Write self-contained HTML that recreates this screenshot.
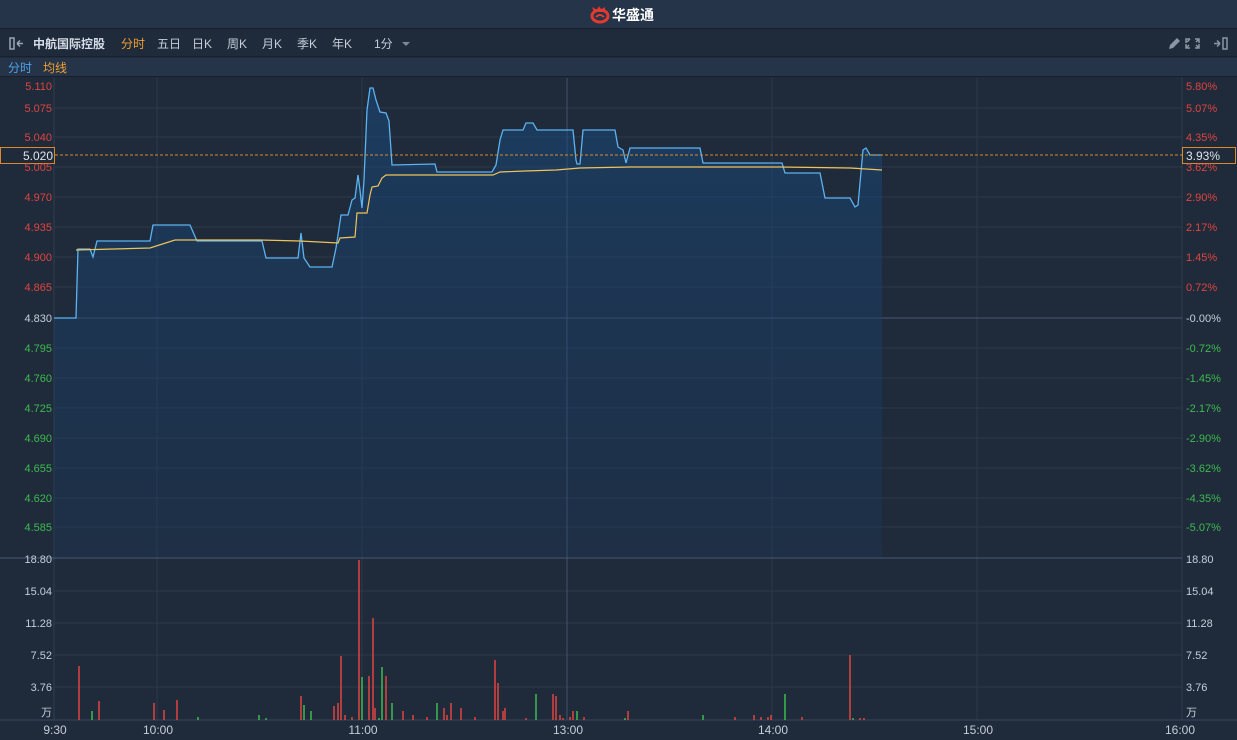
<!DOCTYPE html>
<html><head><meta charset="utf-8"><style>
*{margin:0;padding:0;box-sizing:border-box}
body{width:1237px;height:740px;background:#1f2a3a;overflow:hidden;font-family:"Liberation Sans","Noto Sans CJK SC",sans-serif;position:relative}
.top{position:absolute;left:0;top:0;width:1237px;height:29px;background:#253449;border-bottom:1px solid #17202c}
.tb{position:absolute;left:0;top:30px;width:1237px;height:27px;background:#1f2a3a;border-bottom:1px solid #17202c;font-size:12px;color:#c5ceda}
.tb span{position:absolute;top:5px}
.lg{position:absolute;left:0;top:58px;width:1237px;height:19px;background:#253449;border-bottom:1px solid #17202c;font-size:12px}
svg{position:absolute;left:0;top:0}
</style></head><body>
<div class="top"><svg width="1237" height="29"><g transform="translate(590,6)"><ellipse cx="10" cy="10" rx="8" ry="6" fill="none" stroke="#e23a2e" stroke-width="3"/><path d="M4 6 L2 1 L7 4 L9 0 L11 4 L15 1 L15 6Z" fill="#e23a2e"/><path d="M6 11 Q10 7 14 11" stroke="#e23a2e" stroke-width="2" fill="none"/></g><text x="612" y="20" fill="#fff" font-size="14" font-weight="bold" font-family="Liberation Sans,Noto Sans CJK SC,sans-serif">华盛通</text></svg></div>
<div class="tb">
<svg width="30" height="27"><rect x="10" y="8" width="4" height="11" fill="none" stroke="#9aa5b4" stroke-width="1.5"/><path d="M17 13.5h6M17 13.5l3-3M17 13.5l3 3" stroke="#9aa5b4" stroke-width="1.5" fill="none"/></svg>
<span style="left:33px;font-weight:bold;color:#d6dde8">中航国际控股</span>
<span style="left:121px;color:#f0a030">分时</span>
<span style="left:157px">五日</span><span style="left:192px">日K</span><span style="left:227px">周K</span><span style="left:262px">月K</span><span style="left:297px">季K</span><span style="left:332px">年K</span><span style="left:374px">1分</span>
<svg style="left:400px" width="12" height="27"><path d="M2 12h8l-4 4z" fill="#7d8898"/></svg>
<svg style="left:1160px" width="77" height="27"><path d="M9 19l1-4 7-7 3 3-7 7z" fill="#8b95a3"/><path d="M30 9h-4v4M30 9l-3 3M35 9h4v4M39 9l-3 3M26 14v4h4M26 18l3-3M39 14v4h-4M39 18l-3-3" stroke="#8b95a3" stroke-width="1.5" fill="none"/><path d="M54 13.5h6M60 13.5l-3-3M60 13.5l-3 3" stroke="#8b95a3" stroke-width="1.5" fill="none"/><rect x="63" y="8" width="4" height="11" fill="none" stroke="#8b95a3" stroke-width="1.5"/></svg>
</div>
<div class="lg"><span style="position:absolute;left:8px;top:1px;color:#4da3e8">分时</span><span style="position:absolute;left:43px;top:1px;color:#f0a030">均线</span></div>
<svg width="1237" height="740" style="top:0">
<defs><linearGradient id="g" x1="0" y1="0" x2="0" y2="1"><stop offset="0" stop-color="#1a4878" stop-opacity="0.6"/><stop offset="1" stop-color="#1a3a60" stop-opacity="0.3"/></linearGradient></defs>
<g stroke="#2c394b" stroke-width="1">
<path d="M54 108H1182M54 137H1182M54 167H1182M54 197H1182M54 227H1182M54 257H1182M54 287H1182M54 348H1182M54 378H1182M54 408H1182M54 438H1182M54 468H1182M54 498H1182M54 527H1182"/>
<path d="M54 591H1182M54 623H1182M54 655H1182M54 687H1182"/>
<path d="M157 78V720M362 78V720M772 78V720M977 78V720"/>
</g>
<path d="M54 78V720M1182 78V720" stroke="#2f3d50"/>
<path d="M567 78V720" stroke="#44546a"/>
<path d="M54 318H1182" stroke="#48586e"/>
<path d="M0 558H1182" stroke="#4a5a78"/>
<path d="M0 720H1237" stroke="#3a4860"/>
<path d="M0 721H1237V740H0z" fill="#1f2a3a"/>
<path id="p" d="M54 318L76 318L78 249L90 249L93 257L97 241L150 241L153 225L190 225L197 241L262 241L266 258L298 258L301 233L304 258L310 267L332 267L336 248L341 215L348 215L352 200L355 198L358 175L360 190L362 208L364 180L367 110L370 88L373 88L376 100L380 112L386 113L389 121L392 165L435 164L437 172L492 172L496 165L500 140L503 130L523 130L526 123L533 123L537 130L573 130L576 160L577 164L580 164L583 130L615 130L618 147L623 150L626 163L630 148L700 148L703 163L782 163L785 173L820 173L825 198L850 198L855 207L858 205L863 150L866 148L870 155L882 155" fill="none"/>
<path d="M54 318L76 318L78 249L90 249L93 257L97 241L150 241L153 225L190 225L197 241L262 241L266 258L298 258L301 233L304 258L310 267L332 267L336 248L341 215L348 215L352 200L355 198L358 175L360 190L362 208L364 180L367 110L370 88L373 88L376 100L380 112L386 113L389 121L392 165L435 164L437 172L492 172L496 165L500 140L503 130L523 130L526 123L533 123L537 130L573 130L576 160L577 164L580 164L583 130L615 130L618 147L623 150L626 163L630 148L700 148L703 163L782 163L785 173L820 173L825 198L850 198L855 207L858 205L863 150L866 148L870 155L882 155L882 557L54 557Z" fill="url(#g)"/>
<use href="#p" stroke="#5cb3f0" stroke-width="1.3"/>
<path d="M76 250L150 248L175 240L260 240L300 241L338 243L340 238L355 237L357 213L367 213L370 195L372 187L378 186L382 178L386 175L493 175L500 172L525 171L556 170L580 168L630 167L700 167L780 167L850 168L882 170" fill="none" stroke="#f0c35a" stroke-width="1.2"/>
<path d="M0 155H1182" stroke="#d98a2c" stroke-dasharray="3,2"/>
<rect x="0.5" y="147.5" width="54" height="16" fill="#1f2a3a" stroke="#d98a2c"/>
<rect x="1182.5" y="147.5" width="53" height="16" fill="#1f2a3a" stroke="#d98a2c"/>
<g font-size="11" font-family="Liberation Sans,sans-serif">
<text x="53" y="160" fill="#e0e4ea" text-anchor="end" font-size="12">5.020</text>
<text x="1186" y="160" fill="#e0e4ea" font-size="12">3.93%</text>
<g fill="#e0453f" text-anchor="end"><text x="52" y="90">5.110</text><text x="52" y="112">5.075</text><text x="52" y="141">5.040</text><text x="52" y="171">5.005</text><text x="52" y="201">4.970</text><text x="52" y="231">4.935</text><text x="52" y="261">4.900</text><text x="52" y="291">4.865</text></g>
<text x="52" y="322" fill="#c5ceda" text-anchor="end">4.830</text>
<g fill="#3dbb4f" text-anchor="end"><text x="52" y="352">4.795</text><text x="52" y="382">4.760</text><text x="52" y="412">4.725</text><text x="52" y="442">4.690</text><text x="52" y="472">4.655</text><text x="52" y="502">4.620</text><text x="52" y="531">4.585</text></g>
<g fill="#e0453f"><text x="1186" y="90">5.80%</text><text x="1186" y="112">5.07%</text><text x="1186" y="141">4.35%</text><text x="1186" y="171">3.62%</text><text x="1186" y="201">2.90%</text><text x="1186" y="231">2.17%</text><text x="1186" y="261">1.45%</text><text x="1186" y="291">0.72%</text></g>
<text x="1186" y="322" fill="#c5ceda">-0.00%</text>
<g fill="#3dbb4f"><text x="1186" y="352">-0.72%</text><text x="1186" y="382">-1.45%</text><text x="1186" y="412">-2.17%</text><text x="1186" y="442">-2.90%</text><text x="1186" y="472">-3.62%</text><text x="1186" y="502">-4.35%</text><text x="1186" y="531">-5.07%</text></g>
<g fill="#c5ceda"><text x="52" y="563" text-anchor="end">18.80</text><text x="52" y="595" text-anchor="end">15.04</text><text x="52" y="627" text-anchor="end">11.28</text><text x="52" y="659" text-anchor="end">7.52</text><text x="52" y="691" text-anchor="end">3.76</text><text x="52" y="716" text-anchor="end">万</text>
<text x="1186" y="563">18.80</text><text x="1186" y="595">15.04</text><text x="1186" y="627">11.28</text><text x="1186" y="659">7.52</text><text x="1186" y="691">3.76</text><text x="1186" y="716">万</text></g>
<g fill="#c5ceda" font-size="12" text-anchor="middle"><text x="55" y="734">9:30</text><text x="158" y="734">10:00</text><text x="363" y="734">11:00</text><text x="568" y="734">13:00</text><text x="773" y="734">14:00</text><text x="978" y="734">15:00</text><text x="1180" y="734">16:00</text></g>
</g>
<g stroke="#e0453f" stroke-width="1.5">
<path d="M79 720V666M99 720V701M154 720V703M164 720V710M177 720V700M301 720V696M334 720V706M338 720V703M341 720V656M345 720V715M352 720V717M359 720V560M369 720V676M373 720V618M375 720V708M386 720V676M403 720V711M413 720V715M427 720V717M444 720V708M447 720V715M451 720V703M461 720V708M475 720V717M495 720V660M498 720V683M503 720V711M505 720V708M526 720V718M553 720V694M556 720V696M560 720V715M563 720V718M570 720V717M573 720V711M584 720V717M628 720V711M735 720V717M754 720V715M761 720V717M768 720V717M771 720V715M802 720V717M850 720V655M860 720V718M864 720V718"/>
</g>
<g stroke="#3dbb4f" stroke-width="1.5">
<path d="M92 720V711M198 720V717M259 720V715M266 720V718M304 720V705M311 720V711M362 720V677M379 720V718M382 720V667M392 720V703M437 720V703M536 720V694M577 720V711M625 720V718M703 720V715M785 720V694M853 720V718"/>
</g>
</svg>
</body></html>
